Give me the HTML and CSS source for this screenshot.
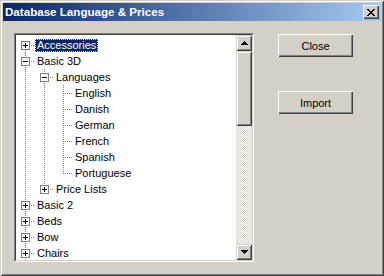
FILE: index.html
```html
<!DOCTYPE html>
<html lang="en">
<head>
    <meta charset="UTF-8">
    <title>Database Language &amp; Prices</title>
    <link rel="stylesheet" href="styles.css">
</head>
<body>
    <div class="window">
        <div class="titlebar">
            <span class="title">Database Language &amp; Prices</span>
            <div class="title-close">
                <svg width="8" height="7" viewBox="0 0 8 7" shape-rendering="crispEdges">
                    <path d="M0 0h2v1h-2zM6 0h2v1h-2zM1 1h2v1h-2zM5 1h2v1h-2zM2 2h4v1h-4zM3 3h2v1h-2zM2 4h4v1h-4zM1 5h2v1h-2zM5 5h2v1h-2zM0 6h2v1h-2zM6 6h2v1h-2z" fill="#000"/>
                </svg>
            </div>
        </div>

        <div class="client">
            <div class="treebox">
                <div class="treebox-inner">
                    <ul class="tree">
                        <li>
                            <div class="row"><span class="exp plus"></span><span class="label selected">Accessories</span></div>
                        </li>
                        <li>
                            <div class="row"><span class="exp minus"></span><span class="label">Basic 3D</span></div>
                            <ul>
                                <li>
                                    <div class="row"><span class="exp minus"></span><span class="label">Languages</span></div>
                                    <ul>
                                        <li><div class="row"><span class="exp"></span><span class="label">English</span></div></li>
                                        <li><div class="row"><span class="exp"></span><span class="label">Danish</span></div></li>
                                        <li><div class="row"><span class="exp"></span><span class="label">German</span></div></li>
                                        <li><div class="row"><span class="exp"></span><span class="label">French</span></div></li>
                                        <li><div class="row"><span class="exp"></span><span class="label">Spanish</span></div></li>
                                        <li><div class="row"><span class="exp"></span><span class="label">Portuguese</span></div></li>
                                    </ul>
                                </li>
                                <li>
                                    <div class="row"><span class="exp plus"></span><span class="label">Price Lists</span></div>
                                </li>
                            </ul>
                        </li>
                        <li><div class="row"><span class="exp plus"></span><span class="label">Basic 2</span></div></li>
                        <li><div class="row"><span class="exp plus"></span><span class="label">Beds</span></div></li>
                        <li><div class="row"><span class="exp plus"></span><span class="label">Bow</span></div></li>
                        <li class="more"><div class="row"><span class="exp plus"></span><span class="label">Chairs</span></div></li>
                    </ul>

                    <div class="vscroll">
                        <div class="sb-btn">
                            <svg width="7" height="4" viewBox="0 0 7 4" shape-rendering="crispEdges">
                                <path d="M3 0h1v1h-1zM2 1h3v1h-3zM1 2h5v1h-5zM0 3h7v1h-7z" fill="#000"/>
                            </svg>
                        </div>
                        <div class="sb-track">
                            <div class="sb-thumb"></div>
                        </div>
                        <div class="sb-btn">
                            <svg width="7" height="4" viewBox="0 0 7 4" shape-rendering="crispEdges">
                                <path d="M0 0h7v1h-7zM1 1h5v1h-5zM2 2h3v1h-3zM3 3h1v1h-1z" fill="#000"/>
                            </svg>
                        </div>
                    </div>
                </div>
            </div>

            <div class="actions">
                <button class="btn">Close</button>
                <button class="btn">Import</button>
            </div>
        </div>
    </div>
</body>
</html>
```

FILE: styles.css
```css
body {
    margin: 0;
    background: #D4D0C8;
    font-family: "Liberation Sans", Arial, sans-serif;
    font-size: 11px;
}
.window {
    width: 384px;
    height: 276px;
    box-sizing: border-box;
    padding: 3px;
    background: #D4D0C8;
    box-shadow: inset 1px 1px #D4D0C8, inset -1px -1px #404040,
                inset 2px 2px #FFFFFF, inset -2px -2px #808080;
}
.titlebar {
    height: 18px;
    display: flex;
    align-items: center;
    justify-content: space-between;
    padding: 0 2px;
    background: linear-gradient(to right, #0A246A, #A6CAF0);
}
.title {
    color: #fff;
    font-weight: bold;
    font-size: 11.6px;
    line-height: 18px;
}
.title-close {
    width: 16px;
    height: 14px;
    box-sizing: border-box;
    display: flex;
    align-items: center;
    justify-content: center;
    background: #D4D0C8;
    box-shadow: inset 1px 1px #FFFFFF, inset -1px -1px #404040,
                inset -2px -2px #808080;
}
.title-close svg {
    display: block;
}
.client {
    display: flex;
    padding: 12px 0 0 11px;
}
.treebox {
    width: 240px;
    height: 229px;
    box-sizing: border-box;
    border: 1px solid;
    border-color: #808080 #FFFFFF #FFFFFF #808080;
}
.treebox-inner {
    height: 100%;
    box-sizing: border-box;
    display: flex;
    background: #fff;
    border: 1px solid;
    border-color: #404040 #D4D0C8 #D4D0C8 #404040;
}
.tree {
    flex: 1;
    overflow: hidden;
    list-style: none;
    margin: 0;
    padding: 2px 0 0 0;
}
.tree ul {
    list-style: none;
    margin: 0;
    padding: 0 0 0 19px;
}
.tree li {
    position: relative;
}
/* dotted tree lines */
.tree li::before {
    content: "";
    position: absolute;
    left: 9px;
    top: 0;
    bottom: 0;
    width: 1px;
    background: repeating-linear-gradient(to bottom, #808080 0 1px, transparent 1px 2px);
}
.tree li:last-child::before {
    bottom: auto;
    height: 9px;
}
.tree > li:first-child::before {
    top: 9px;
}
.tree > li.more::before {
    bottom: 0;
    height: auto;
}
.row {
    position: relative;
    height: 16px;
    display: flex;
    align-items: flex-start;
}
.row::before {
    content: "";
    position: absolute;
    left: 10px;
    top: 8px;
    width: 9px;
    height: 1px;
    background: repeating-linear-gradient(to right, transparent 0 1px, #808080 1px 2px);
}
.exp {
    width: 19px;
    height: 16px;
    flex: none;
    position: relative;
}
.plus, .minus {
    z-index: 1;
}
.plus::before, .minus::before {
    content: "";
    position: absolute;
    left: 5px;
    top: 4px;
    width: 9px;
    height: 9px;
    box-sizing: border-box;
    border: 1px solid #808080;
    background: #fff linear-gradient(#000, #000) center / 5px 1px no-repeat;
}
.plus::after {
    content: "";
    position: absolute;
    left: 9px;
    top: 6px;
    width: 1px;
    height: 5px;
    background: #000;
}
.label {
    position: relative;
    z-index: 1;
    margin-top: 2px;
    height: 13px;
    line-height: 13px;
    padding: 0 2px;
    color: #000;
    white-space: nowrap;
}
.label.selected {
    background: #0A246A;
    color: #fff;
    outline: 1px dotted #F5DB95;
    outline-offset: -1px;
}
.vscroll {
    width: 16px;
    display: flex;
    flex-direction: column;
}
.sb-btn {
    height: 16px;
    flex: none;
    display: flex;
    align-items: center;
    justify-content: center;
    background: #D4D0C8;
    box-shadow: inset 1px 1px #D4D0C8, inset -1px -1px #404040,
                inset 2px 2px #FFFFFF, inset -2px -2px #808080;
}
.sb-btn svg {
    display: block;
}
.sb-track {
    flex: 1;
    background: repeating-conic-gradient(#D4D0C8 0 25%, #FFFFFF 0 50%) 0 0 / 2px 2px;
}
.sb-thumb {
    height: 75px;
    background: #D4D0C8;
    box-shadow: inset 1px 1px #D4D0C8, inset -1px -1px #404040,
                inset 2px 2px #FFFFFF, inset -2px -2px #808080;
}
.actions {
    display: flex;
    flex-direction: column;
    gap: 34px;
    padding: 1px 0 0 24px;
}
.btn {
    width: 75px;
    height: 23px;
    padding: 0;
    border: none;
    background: #D4D0C8;
    font-family: "Liberation Sans", Arial, sans-serif;
    font-size: 11px;
    color: #000;
    box-shadow: inset 1px 1px #FFFFFF, inset -1px -1px #404040,
                inset -2px -2px #808080;
}
```
